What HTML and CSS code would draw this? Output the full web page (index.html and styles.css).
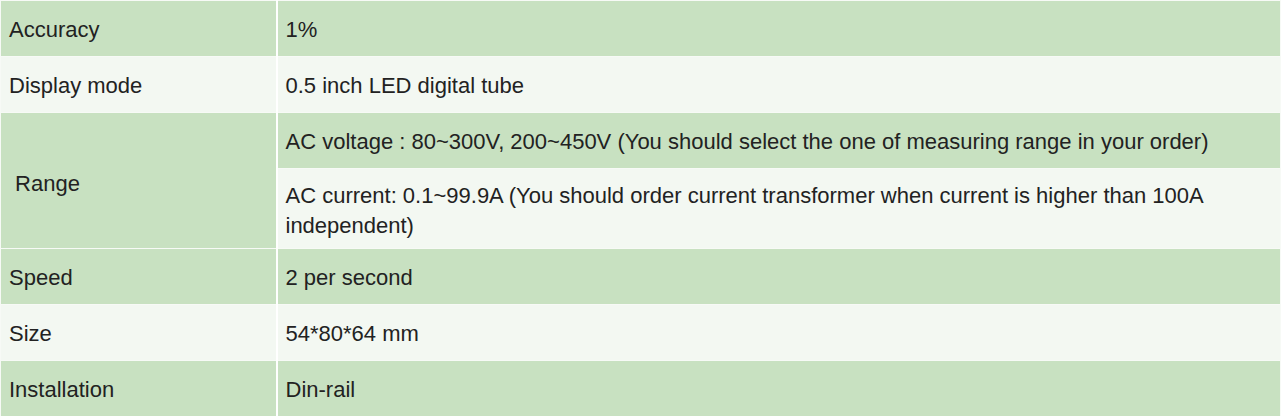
FILE: index.html
```html
<!DOCTYPE html>
<html>
<head>
<meta charset="utf-8">
<link rel="stylesheet" href="styles.css">
</head>
<body>
<table class="spec">
  <tr class="green">
    <td class="label">Accuracy</td>
    <td class="value">1%</td>
  </tr>
  <tr class="light">
    <td class="label">Display mode</td>
    <td class="value">0.5 inch LED digital tube</td>
  </tr>
  <tr class="green">
    <td class="label range" rowspan="2">&nbsp;Range</td>
    <td class="value">AC voltage : 80~300V, 200~450V (You should select the one of measuring range in your order)</td>
  </tr>
  <tr class="light tall">
    <td class="value">AC current: 0.1~99.9A (You should order current transformer when current is higher than 100A independent)</td>
  </tr>
  <tr class="green">
    <td class="label">Speed</td>
    <td class="value">2 per second</td>
  </tr>
  <tr class="light">
    <td class="label">Size</td>
    <td class="value">54*80*64 mm</td>
  </tr>
  <tr class="green">
    <td class="label">Installation</td>
    <td class="value">Din-rail</td>
  </tr>
</table>
</body>
</html>
```

FILE: styles.css
```css
html, body {
  margin: 0;
  padding: 0;
  background: #ffffff;
}

.spec {
  width: 1281px;
  border-collapse: collapse;
  table-layout: fixed;
  font-family: "Liberation Sans", Arial, sans-serif;
  font-size: 22px;
  line-height: 30px;
  color: #222222;
}

.spec td {
  border: 1px solid #f7faf6;
  vertical-align: middle;
  padding: 2px 8px 0 8px;
  height: 56px;
  box-sizing: border-box;
}

.spec td.label {
  width: 276px;
  border-right: 2px solid #ffffff;
}

.spec td.range {
  background: #c8e1c1;
  padding-top: 6px;
}

.spec td.value {
  padding-right: 60px;
}

.spec tr.tall td {
  height: 80px;
  padding-top: 4px;
}

.green td {
  background: #c8e1c1;
}

.light td {
  background: #f3f8f2;
}
```
